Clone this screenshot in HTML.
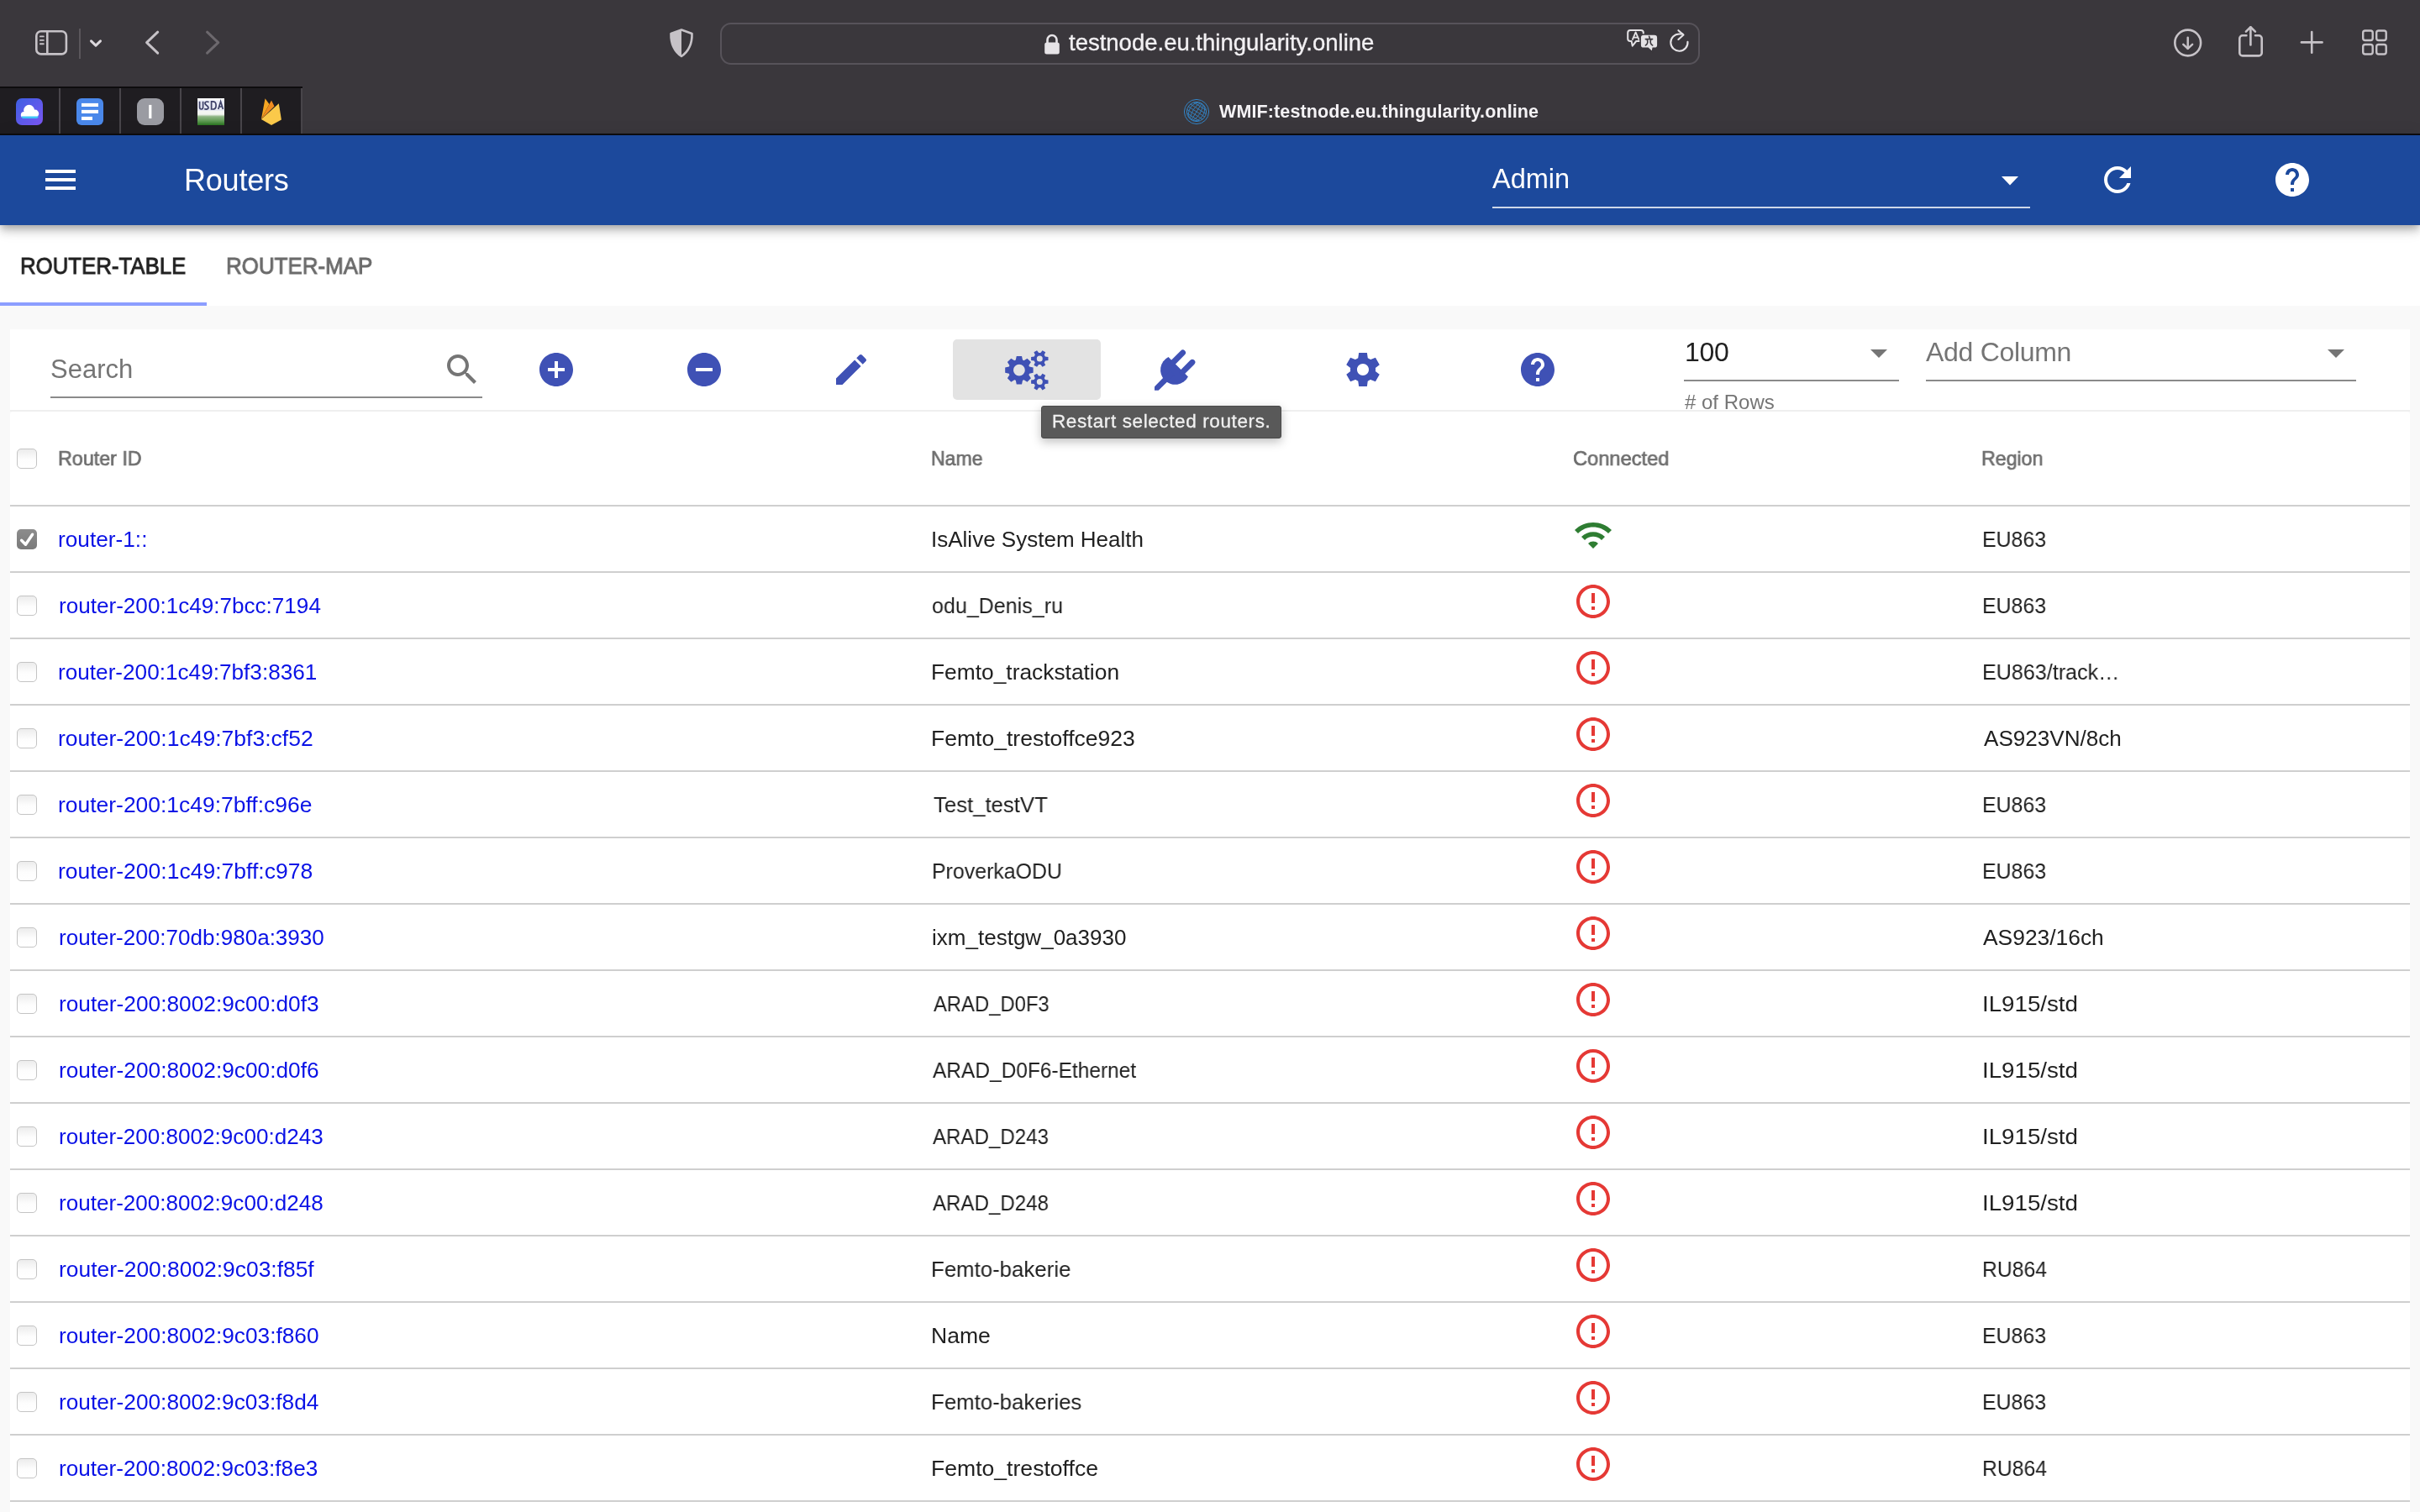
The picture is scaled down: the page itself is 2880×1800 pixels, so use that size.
<!DOCTYPE html>
<html><head><meta charset="utf-8"><title>Routers</title>
<style>
html,body{margin:0;padding:0;width:2880px;height:1800px;overflow:hidden;background:#f9f9f9}
.a{position:absolute}
.t{position:absolute;white-space:nowrap;font-family:"Liberation Sans", sans-serif;will-change:transform}
svg.a{overflow:visible}
</style></head><body>
<div class="a" style="left:0px;top:0px;width:2880px;height:161px;background:#3a373c"></div>
<div class="a" style="left:0px;top:104px;width:359px;height:57px;background:#1f1d21"></div>
<div class="a" style="left:0px;top:103px;width:360px;height:2px;background:#0d0c0e"></div>
<div class="a" style="left:0px;top:159px;width:2880px;height:2px;background:#0d0c0e"></div>
<div class="a" style="left:70px;top:105px;width:2px;height:54px;background:#48454a"></div>
<div class="a" style="left:142px;top:105px;width:2px;height:54px;background:#48454a"></div>
<div class="a" style="left:214px;top:105px;width:2px;height:54px;background:#48454a"></div>
<div class="a" style="left:286px;top:105px;width:2px;height:54px;background:#48454a"></div>
<div class="a" style="left:358px;top:105px;width:2px;height:54px;background:#48454a"></div>
<svg class="a" style="left:40px;top:34px;" width="44" height="34" viewBox="0 0 44 34"><rect x="3.3" y="3.2" width="35.6" height="27.2" rx="5.5" fill="none" stroke="#c6c2c7" stroke-width="2.6"/><line x1="16.3" y1="3" x2="16.3" y2="31" stroke="#c6c2c7" stroke-width="2.6"/><g stroke="#c6c2c7" stroke-width="1.9" stroke-linecap="round"><line x1="7.9" y1="9.4" x2="11.8" y2="9.4"/><line x1="7.9" y1="13.9" x2="11.8" y2="13.9"/><line x1="7.9" y1="18.2" x2="11.8" y2="18.2"/></g></svg>
<div class="a" style="left:94px;top:34px;width:2px;height:36px;background:#5a565b"></div>
<svg class="a" style="left:104px;top:44px;" width="20" height="14" viewBox="0 0 20 14"><polyline points="4.5,4.9 10,10.2 15.5,4.9" fill="none" stroke="#dcd8dd" stroke-width="3" stroke-linecap="round" stroke-linejoin="round"/></svg>
<svg class="a" style="left:168px;top:32px;" width="26" height="38" viewBox="0 0 26 38"><polyline points="19.7,6.2 6.6,18.65 19.7,31.1" fill="none" stroke="#c6c2c7" stroke-width="3" stroke-linecap="round" stroke-linejoin="round"/></svg>
<svg class="a" style="left:240px;top:32px;" width="26" height="38" viewBox="0 0 26 38"><polyline points="6.6,6.2 19.7,18.65 6.6,31.1" fill="none" stroke="#6c686d" stroke-width="3" stroke-linecap="round" stroke-linejoin="round"/></svg>
<svg class="a" style="left:794px;top:32px;" width="34" height="40" viewBox="0 0 34 40"><path d="M17 3.5 L29.5 8 Q30 26 17 35 Q4 26 4.5 8 Z" fill="none" stroke="#c6c2c7" stroke-width="2.6" stroke-linejoin="round"/><path d="M17 3.5 L4.5 8 Q4 26 17 35 Z" fill="#c6c2c7"/></svg>
<div class="a" style="left:857px;top:27px;width:1166px;height:50px;border:2px solid #57535a;border-radius:13px;box-sizing:border-box"></div>
<svg class="a" style="left:1240px;top:38px;" width="24" height="30" viewBox="0 0 24 30"><path d="M6.5 13 V9.5 a5.5 5.5 0 0 1 11 0 V13" fill="none" stroke="#e6e3e7" stroke-width="2.6"/><rect x="3.2" y="12.5" width="17.6" height="14" rx="2.5" fill="#e6e3e7"/></svg>
<div class="t sf" style="left:1272.00px;top:36.72px;font-size:27.5px;line-height:27.5px;color:#f2f0f3;font-weight:400;letter-spacing:0px;-webkit-text-stroke:0.35px #f2f0f3;">testnode.eu.thingularity.online</div>
<svg class="a" style="left:1930px;top:30px;" width="50" height="36" viewBox="0 0 50 36"><path d="M10.20 6.10 L22.80 6.10 Q25.80 6.10 25.80 9.10 L25.80 16.00 Q25.80 19.00 22.80 19.00 L17.20 19.00 L12.70 24.60 L11.60 19.00 L10.20 19.00 Q7.20 19.00 7.20 16.00 L7.20 9.10 Q7.20 6.10 10.20 6.10 Z" fill="none" stroke="#e4e2e5" stroke-width="2" stroke-linejoin="round"/><path d="M12.60 17.60 L16.60 8.40 L20.60 17.60 M13.90 14.60 L19.30 14.60" fill="none" stroke="#e4e2e5" stroke-width="1.8" stroke-linejoin="round"/><path d="M26.10 11.00 L38.90 11.00 Q42.90 11.00 42.90 15.00 L42.90 23.40 Q42.90 27.40 38.90 27.40 L37.20 27.40 L36.30 31.90 L31.20 27.40 L26.10 27.40 Q22.10 27.40 22.10 23.40 L22.10 15.00 Q22.10 11.00 26.10 11.00 Z" fill="#e4e2e5" stroke="#3a373c" stroke-width="1.6"/><path d="M32.60 13.30 L33.20 15.20 M28.30 16.60 L36.60 16.60 M30.10 16.80 Q32.20 22.00 28.30 24.00 M34.80 16.80 Q32.80 22.00 36.70 24.00" fill="none" stroke="#3a373c" stroke-width="1.6" stroke-linecap="round"/></svg>
<svg class="a" style="left:1984px;top:32px;" width="30" height="32" viewBox="0 0 30 32"><path d="M24.46 17.72 A10.1 10.1 0 1 1 14.4 8.5 H18.5" fill="none" stroke="#e4e2e5" stroke-width="2.1" stroke-linecap="round"/><polyline points="13.4,4.2 19.5,9.5 13.4,15" fill="none" stroke="#e4e2e5" stroke-width="2.1" stroke-linecap="round" stroke-linejoin="round"/></svg>
<svg class="a" style="left:2584px;top:32px;" width="40" height="40" viewBox="0 0 40 40"><circle cx="19.7" cy="19" r="15.4" fill="none" stroke="#c6c2c7" stroke-width="2.6"/><line x1="19.7" y1="12.8" x2="19.7" y2="25.7" stroke="#c6c2c7" stroke-width="2.5" stroke-linecap="round"/><polyline points="14.3,20.9 19.7,25.9 25.1,20.9" fill="none" stroke="#c6c2c7" stroke-width="2.5" stroke-linecap="round" stroke-linejoin="round"/></svg>
<svg class="a" style="left:2660px;top:28px;" width="38" height="44" viewBox="0 0 38 44"><path d="M13.4 14.3 H8.8 a3.5 3.5 0 0 0 -3.5 3.5 V34.9 a3.5 3.5 0 0 0 3.5 3.5 H28.2 a3.5 3.5 0 0 0 3.5 -3.5 V17.8 a3.5 3.5 0 0 0 -3.5 -3.5 H24" fill="none" stroke="#c6c2c7" stroke-width="2.6" stroke-linecap="round"/><line x1="18.4" y1="4.5" x2="18.4" y2="25.4" stroke="#c6c2c7" stroke-width="2.6" stroke-linecap="round"/><polyline points="12.9,9.6 18.4,4.3 23.9,9.6" fill="none" stroke="#c6c2c7" stroke-width="2.6" stroke-linecap="round" stroke-linejoin="round"/></svg>
<svg class="a" style="left:2734px;top:33px;" width="36" height="36" viewBox="0 0 36 36"><line x1="17.2" y1="5.1" x2="17.2" y2="29.7" stroke="#c6c2c7" stroke-width="2.6" stroke-linecap="round"/><line x1="4.9" y1="17.4" x2="29.5" y2="17.4" stroke="#c6c2c7" stroke-width="2.6" stroke-linecap="round"/></svg>
<svg class="a" style="left:2808px;top:32px;" width="40" height="40" viewBox="0 0 40 40"><rect x="4.2" y="4.5" width="11.5" height="11.5" rx="2.5" fill="none" stroke="#c6c2c7" stroke-width="2.4"/><rect x="20.2" y="4.5" width="11.5" height="11.5" rx="2.5" fill="none" stroke="#c6c2c7" stroke-width="2.4"/><rect x="4.2" y="21" width="11.5" height="11.5" rx="2.5" fill="none" stroke="#c6c2c7" stroke-width="2.4"/><rect x="20.2" y="21" width="11.5" height="11.5" rx="2.5" fill="none" stroke="#c6c2c7" stroke-width="2.4"/></svg>
<svg class="a" style="left:18px;top:116px;" width="34" height="34" viewBox="0 0 34 34"><defs><linearGradient id="cg" x1="0" y1="0" x2="1" y2="1"><stop offset="0" stop-color="#3d5fe2"/><stop offset="1" stop-color="#7a55f2"/></linearGradient></defs><rect x="1" y="1" width="32" height="32" rx="7" fill="url(#cg)"/><g fill="#fff"><circle cx="16.6" cy="15.2" r="6.4"/><circle cx="23.6" cy="19.2" r="4.6"/><circle cx="10.6" cy="20.8" r="3.8"/><rect x="10" y="18" width="14" height="7"/></g><path d="M7.4 22.6 H28 Q27.6 25 25.5 25 H9.6 Q7.6 25 7.4 22.6Z" fill="#3fc4f5"/></svg>
<svg class="a" style="left:90px;top:116px;" width="34" height="34" viewBox="0 0 34 34"><rect x="1" y="1" width="32" height="32" rx="6" fill="#4a88ea"/><rect x="7" y="6.9" width="20" height="4.1" fill="#fff"/><rect x="7" y="14.9" width="20" height="4.1" fill="#fff"/><rect x="7" y="22.9" width="13" height="4.1" fill="#fff"/></svg>
<svg class="a" style="left:162px;top:116px;" width="34" height="34" viewBox="0 0 34 34"><rect x="1" y="1" width="32" height="32" rx="9" fill="#9a9ba2"/><rect x="15.2" y="8.9" width="3.2" height="16.1" fill="#fff"/></svg>
<svg class="a" style="left:234px;top:116px;" width="34" height="34" viewBox="0 0 34 34"><defs><linearGradient id="ug" x1="0" y1="0" x2="0" y2="1"><stop offset="0" stop-color="#fdfdff"/><stop offset="0.6" stop-color="#f2f5f0"/><stop offset="0.68" stop-color="#8fb585"/><stop offset="0.85" stop-color="#5e9a52"/><stop offset="1" stop-color="#2a7420"/></linearGradient></defs><rect x="1" y="1" width="32" height="32" fill="url(#ug)"/><rect x="1" y="3.5" width="32" height="12.5" fill="#d8dcf0" opacity="0.5"/><path d="M3.6 4.8 V11.8 Q3.6 14 5.6 14 Q7.6 14 7.6 11.8 V4.8 M14.6 5.6 Q12.2 4.4 10.4 5.6 Q9.2 7.6 11.6 9.2 Q14.6 11 13.8 13 Q11.8 14.8 9.2 13.6 M17.6 4.8 V14 H19.4 Q23.1 14 23.1 9.4 Q23.1 4.8 19.4 4.8 Z M25.8 14 L28.6 4.8 L31.4 14 M26.8 11 H30.4" fill="none" stroke="#3e4168" stroke-width="1.7"/></svg>
<svg class="a" style="left:305px;top:116px;" width="34" height="34" viewBox="0 0 34 34"><path d="M5.9 26 L10.5 1.2 L15.5 8 Z" fill="#f6a623"/><path d="M5.9 26 L18 3.6 L21.5 10.5 Z" fill="#f08c1f"/><path d="M5.9 26 L26.8 7.2 L29.9 26.5 L18 33 Z" fill="#fbc94a"/></svg>
<svg class="a" style="left:1408px;top:117px;" width="32" height="32" viewBox="0 0 32 32"><defs><clipPath id="gclip"><circle cx="16" cy="16" r="11.6"/></clipPath></defs><g fill="none" stroke="#3384c6"><circle cx="16" cy="16" r="14.6" stroke-width="1"/><circle cx="16" cy="16" r="11.6" stroke-width="1"/><g clip-path="url(#gclip)" transform="rotate(32 16 16)" stroke-width="0.8"><ellipse cx="16" cy="16" rx="4.4" ry="11.6"/><ellipse cx="16" cy="16" rx="8.8" ry="11.6"/><line x1="16" y1="3" x2="16" y2="29"/><line x1="2" y1="8.4" x2="30" y2="8.4"/><line x1="2" y1="12.2" x2="30" y2="12.2"/><line x1="2" y1="16" x2="30" y2="16"/><line x1="2" y1="19.8" x2="30" y2="19.8"/><line x1="2" y1="23.6" x2="30" y2="23.6"/></g></g></svg>
<div class="t sf" style="left:1450.50px;top:122.50px;font-size:21.5px;line-height:21.5px;color:#f4f2f5;font-weight:700;letter-spacing:0.12px;">WMIF:testnode.eu.thingularity.online</div>
<div class="a" style="left:0px;top:161px;width:2880px;height:1639px;background:#f9f9f9"></div>
<div class="a" style="left:0px;top:268px;width:2880px;height:96px;background:#fff"></div>
<div class="a" style="left:0px;top:161px;width:2880px;height:107px;background:#1c499c;box-shadow:0 4px 8px -2px rgba(0,0,0,.2),0 8px 10px 0 rgba(0,0,0,.14),0 2px 20px 0 rgba(0,0,0,.12)"></div>
<div class="a" style="left:54px;top:202px;width:36px;height:4px;background:#fff"></div>
<div class="a" style="left:54px;top:212px;width:36px;height:4px;background:#fff"></div>
<div class="a" style="left:54px;top:222px;width:36px;height:4px;background:#fff"></div>
<div class="t " style="left:218.50px;top:196.53px;font-size:36px;line-height:36px;color:#fff;font-weight:400;letter-spacing:-0.2px;">Routers</div>
<div class="t " style="left:1776.00px;top:196.69px;font-size:32.5px;line-height:32.5px;color:#fff;font-weight:400;letter-spacing:0px;">Admin</div>
<div class="a" style="left:1776px;top:246px;width:640px;height:2px;background:rgba(255,255,255,0.78)"></div>
<svg class="a" style="left:2382px;top:210px;" width="20" height="11" viewBox="0 0 20 11"><polygon points="0,0 20,0 10,10.5" fill="#fff"/></svg>
<svg class="a" style="left:2496px;top:190px;" width="48" height="48" viewBox="0 0 24 24"><path fill="#fff" d="M17.65 6.35C16.2 4.9 14.21 4 12 4c-4.42 0-7.99 3.58-7.99 8s3.57 8 7.99 8c3.73 0 6.84-2.55 7.73-6h-2.08c-.82 2.33-3.04 4-5.65 4-3.31 0-6-2.69-6-6s2.69-6 6-6c1.66 0 3.14.69 4.22 1.78L13 11h7V4l-2.35 2.35z"/></svg>
<svg class="a" style="left:2704px;top:190px;" width="48" height="48" viewBox="0 0 24 24"><path fill="#fff" d="M12 2C6.48 2 2 6.48 2 12s4.48 10 10 10 10-4.48 10-10S17.52 2 12 2zm1 17h-2v-2h2v2zm2.07-7.75l-.9.92C13.45 12.9 13 13.5 13 15h-2v-.5c0-1.1.45-2.1 1.17-2.83l1.24-1.26c.37-.36.59-.86.59-1.41 0-1.1-.9-2-2-2s-2 .9-2 2H8c0-2.21 1.79-4 4-4s4 1.79 4 4c0 .88-.36 1.68-.93 2.25z"/></svg>
<div class="t " style="left:23.50px;top:302.07px;font-size:28.5px;line-height:28.5px;color:#212121;font-weight:400;letter-spacing:0px;transform:scaleX(0.905);transform-origin:0 0;-webkit-text-stroke:0.95px #212121;">ROUTER-TABLE</div>
<div class="t " style="left:269.00px;top:302.07px;font-size:28.5px;line-height:28.5px;color:#6b6b6b;font-weight:400;letter-spacing:0px;transform:scaleX(0.91);transform-origin:0 0;-webkit-text-stroke:0.95px #6b6b6b;">ROUTER-MAP</div>
<div class="a" style="left:0px;top:360px;width:246px;height:4px;background:#8c9eff"></div>
<div class="a" style="left:12px;top:392px;width:2856px;height:96px;background:#fff"></div>
<div class="a" style="left:12px;top:488px;width:2856px;height:2px;background:#efefef"></div>
<div class="t " style="left:60.00px;top:423.56px;font-size:31px;line-height:31px;color:#757575;font-weight:400;letter-spacing:0px;">Search</div>
<div class="a" style="left:60px;top:472px;width:514px;height:2px;background:#8a8a8a"></div>
<svg class="a" style="left:526px;top:416px;" width="48" height="48" viewBox="0 0 24 24"><path fill="#757575" d="M15.5 14h-.79l-.28-.27C15.41 12.59 16 11.11 16 9.5 16 5.91 13.09 3 9.5 3S3 5.91 3 9.5 5.91 16 9.5 16c1.61 0 3.09-.59 4.23-1.57l.27.28v.79l5 4.99L20.49 19l-4.99-5zm-6 0C7.01 14 5 11.99 5 9.5S7.01 5 9.5 5 14 7.01 14 9.5 11.99 14 9.5 14z"/></svg>
<svg class="a" style="left:638px;top:416px;" width="48" height="48" viewBox="0 0 24 24"><path fill="#3f51b5" d="M12 2C6.48 2 2 6.48 2 12s4.48 10 10 10 10-4.48 10-10S17.52 2 12 2zm5 11h-4v4h-2v-4H7v-2h4V7h2v4h4v2z"/></svg>
<svg class="a" style="left:814px;top:416px;" width="48" height="48" viewBox="0 0 24 24"><path fill="#3f51b5" d="M12 2C6.48 2 2 6.48 2 12s4.48 10 10 10 10-4.48 10-10S17.52 2 12 2zm5 11H7v-2h10v2z"/></svg>
<svg class="a" style="left:989px;top:416px;" width="48" height="48" viewBox="0 0 24 24"><path fill="#3f51b5" d="M3 17.25V21h3.75L17.81 9.94l-3.75-3.75L3 17.25zM20.71 7.04c.39-.39.39-1.02 0-1.41l-2.34-2.34c-.39-.39-1.02-.39-1.41 0l-1.83 1.83 3.75 3.75 1.83-1.83z"/></svg>
<div class="a" style="left:1134px;top:404px;width:176px;height:71.5px;background:#e3e3e3;border-radius:5px"></div>
<svg class="a" style="left:1190px;top:412px;" width="64" height="58" viewBox="0 0 64 58"><path fill="#3f51b5" fill-rule="evenodd" d="M35.03 24.60 L39.61 25.55 L39.61 31.85 L35.03 32.80 L34.88 33.20 L34.73 33.60 L34.56 33.99 L34.37 34.37 L36.94 38.29 L32.49 42.74 L28.57 40.17 L28.19 40.36 L27.80 40.53 L27.40 40.68 L27.00 40.83 L26.05 45.41 L19.75 45.41 L18.80 40.83 L18.40 40.68 L18.00 40.53 L17.61 40.36 L17.23 40.17 L13.31 42.74 L8.86 38.29 L11.43 34.37 L11.24 33.99 L11.07 33.60 L10.92 33.20 L10.77 32.80 L6.19 31.85 L6.19 25.55 L10.77 24.60 L10.92 24.20 L11.07 23.80 L11.24 23.41 L11.43 23.03 L8.86 19.11 L13.31 14.66 L17.23 17.23 L17.61 17.04 L18.00 16.87 L18.40 16.72 L18.80 16.57 L19.75 11.99 L26.05 11.99 L27.00 16.57 L27.40 16.72 L27.80 16.87 L28.19 17.04 L28.57 17.23 L32.49 14.66 L36.94 19.11 L34.37 23.03 L34.56 23.41 L34.73 23.80 L34.88 24.20ZM29.80 28.70 a6.9 6.9 0 1 0 -13.80 0 a6.9 6.9 0 1 0 13.80 0ZM53.84 12.50 L57.49 12.90 L57.49 17.10 L53.84 17.50 L53.62 18.01 L53.36 18.50 L53.07 18.97 L52.73 19.41 L54.21 22.77 L50.57 24.87 L48.40 21.91 L47.85 21.98 L47.30 22.00 L46.75 21.98 L46.20 21.91 L44.03 24.87 L40.39 22.77 L41.87 19.41 L41.53 18.97 L41.24 18.50 L40.98 18.01 L40.76 17.50 L37.11 17.10 L37.11 12.90 L40.76 12.50 L40.98 11.99 L41.24 11.50 L41.53 11.03 L41.87 10.59 L40.39 7.23 L44.03 5.13 L46.20 8.09 L46.75 8.02 L47.30 8.00 L47.85 8.02 L48.40 8.09 L50.57 5.13 L54.21 7.23 L52.73 10.59 L53.07 11.03 L53.36 11.50 L53.62 11.99ZM50.80 15.00 a3.5 3.5 0 1 0 -7.00 0 a3.5 3.5 0 1 0 7.00 0ZM53.84 40.10 L57.49 40.50 L57.49 44.70 L53.84 45.10 L53.62 45.61 L53.36 46.10 L53.07 46.57 L52.73 47.01 L54.21 50.37 L50.57 52.47 L48.40 49.51 L47.85 49.58 L47.30 49.60 L46.75 49.58 L46.20 49.51 L44.03 52.47 L40.39 50.37 L41.87 47.01 L41.53 46.57 L41.24 46.10 L40.98 45.61 L40.76 45.10 L37.11 44.70 L37.11 40.50 L40.76 40.10 L40.98 39.59 L41.24 39.10 L41.53 38.63 L41.87 38.19 L40.39 34.83 L44.03 32.73 L46.20 35.69 L46.75 35.62 L47.30 35.60 L47.85 35.62 L48.40 35.69 L50.57 32.73 L54.21 34.83 L52.73 38.19 L53.07 38.63 L53.36 39.10 L53.62 39.59ZM50.80 42.60 a3.5 3.5 0 1 0 -7.00 0 a3.5 3.5 0 1 0 7.00 0Z"/></svg>
<svg class="a" style="left:1365px;top:410px;" width="65" height="62" viewBox="0 0 65 62"><path fill="#3f51b5" d="M25.48 14.98 L48.92 38.42 A17.4 17.4 0 1 1 25.48 14.98 Z"/><path fill="#3f51b5" d="M27.65 31.30 L9.00 50.20 L9.00 54.80 L13.70 54.80 L32.60 36.25 Z"/><line x1="30.84" y1="21.75" x2="42.64" y2="9.94" stroke="#3f51b5" stroke-width="6.8" stroke-linecap="round"/><line x1="42.15" y1="33.06" x2="53.96" y2="21.26" stroke="#3f51b5" stroke-width="6.8" stroke-linecap="round"/></svg>
<svg class="a" style="left:1598px;top:416px;" width="48" height="48" viewBox="0 0 24 24"><path fill="#3f51b5" d="M19.44 12.99l-.01.02c.04-.33.08-.67.08-1.01 0-.34-.03-.66-.07-.99l.01.02 2.44-1.92-2.43-4.22-2.87 1.16.01.01c-.52-.4-1.09-.74-1.71-.99h.01L14.44 2H9.57l-.44 3.07h.01c-.62.25-1.19.59-1.71.99l.01-.01-2.88-1.17-2.44 4.22 2.44 1.92.01-.02c-.04.33-.07.65-.07.99 0 .34.03.68.08 1.01l-.01-.02-2.1 1.65-.33.26 2.43 4.2 2.88-1.15-.02-.04c.53.41 1.1.75 1.73 1h-.03L9.58 22h4.85s.03-.18.06-.42l.38-2.65h-.01c.62-.25 1.2-.59 1.72-1l-.02.04 2.88 1.15 2.43-4.2s-.14-.12-.33-.26l-2.1-1.65zM12 15.5c-1.93 0-3.5-1.57-3.5-3.5s1.57-3.5 3.5-3.5 3.5 1.57 3.5 3.5-1.57 3.5-3.5 3.5z"/></svg>
<svg class="a" style="left:1806px;top:416px;" width="48" height="48" viewBox="0 0 24 24"><path fill="#3f51b5" d="M12 2C6.48 2 2 6.48 2 12s4.48 10 10 10 10-4.48 10-10S17.52 2 12 2zm1 17h-2v-2h2v2zm2.07-7.75l-.9.92C13.45 12.9 13 13.5 13 15h-2v-.5c0-1.1.45-2.1 1.17-2.83l1.24-1.26c.37-.36.59-.86.59-1.41 0-1.1-.9-2-2-2s-2 .9-2 2H8c0-2.21 1.79-4 4-4s4 1.79 4 4c0 .88-.36 1.68-.93 2.25z"/></svg>
<div class="t " style="left:2005.00px;top:403.21px;font-size:32px;line-height:32px;color:#212121;font-weight:400;letter-spacing:-0.3px;">100</div>
<svg class="a" style="left:2226px;top:416px;" width="20" height="10.5" viewBox="0 0 20 10.5"><polygon points="0,0 20,0 10,10" fill="#757575"/></svg>
<div class="a" style="left:2004px;top:452px;width:256px;height:2px;background:#8a8a8a"></div>
<div class="t " style="left:2005.00px;top:467.38px;font-size:24px;line-height:24px;color:#757575;font-weight:400;letter-spacing:0px;"># of Rows</div>
<div class="t " style="left:2292.00px;top:403.11px;font-size:32px;line-height:32px;color:#757575;font-weight:400;letter-spacing:-0.3px;">Add Column</div>
<svg class="a" style="left:2770px;top:416px;" width="20" height="10.5" viewBox="0 0 20 10.5"><polygon points="0,0 20,0 10,10" fill="#757575"/></svg>
<div class="a" style="left:2292px;top:452px;width:512px;height:2px;background:#8a8a8a"></div>
<div class="a" style="left:12px;top:490px;width:2856px;height:1310px;background:#fff;border-radius:4px 4px 0 0"></div>
<div class="a" style="left:20px;top:534px;width:24px;height:24px;border-radius:5px;box-sizing:border-box;border:1.5px solid #c4c4c4;background:linear-gradient(#ececec,#fdfdfd 55%,#fff)"></div>
<div class="t " style="left:69.00px;top:533.98px;font-size:24px;line-height:24px;color:#6e6e6e;font-weight:400;letter-spacing:0px;transform:scaleX(0.97);transform-origin:0 0;-webkit-text-stroke:0.7px #6e6e6e;">Router ID</div>
<div class="t " style="left:1107.50px;top:533.68px;font-size:24px;line-height:24px;color:#6e6e6e;font-weight:400;letter-spacing:0px;transform:scaleX(0.96);transform-origin:0 0;-webkit-text-stroke:0.7px #6e6e6e;">Name</div>
<div class="t " style="left:1871.50px;top:533.68px;font-size:24px;line-height:24px;color:#6e6e6e;font-weight:400;letter-spacing:0px;transform:scaleX(0.985);transform-origin:0 0;-webkit-text-stroke:0.7px #6e6e6e;">Connected</div>
<div class="t " style="left:2357.50px;top:533.68px;font-size:24px;line-height:24px;color:#6e6e6e;font-weight:400;letter-spacing:0px;transform:scaleX(0.965);transform-origin:0 0;-webkit-text-stroke:0.7px #6e6e6e;">Region</div>
<div class="a" style="left:12px;top:601px;width:2856px;height:2px;background:#cfcfcf"></div>
<div class="a" style="left:20px;top:630px;width:24px;height:24px;border-radius:5px;background:linear-gradient(#8c8c8c,#7a7a7a)"></div>
<svg class="a" style="left:20px;top:630px;" width="24" height="24" viewBox="0 0 24 24"><polyline points="5.6,13.2 10.5,18.2 18.6,6.2" fill="none" stroke="#fff" stroke-width="3.4" stroke-linecap="round" stroke-linejoin="round"/></svg>
<div class="t " style="left:69.48px;top:628.99px;font-size:26px;line-height:26px;color:#0a12e6;font-weight:400;letter-spacing:0px;transform:scaleX(1.0089);transform-origin:0 0;">router-1::</div>
<div class="t " style="left:1108.30px;top:628.99px;font-size:26px;line-height:26px;color:#212121;font-weight:400;letter-spacing:0px;transform:scaleX(1.0004);transform-origin:0 0;">IsAlive System Health</div>
<div class="t " style="left:2359.18px;top:628.99px;font-size:26px;line-height:26px;color:#212121;font-weight:400;letter-spacing:0px;transform:scaleX(0.9579);transform-origin:0 0;">EU863</div>
<svg class="a" style="left:1872px;top:613px;" width="48" height="48" viewBox="0 0 24 24"><path fill="#2e7d32" d="M1 9l2 2c4.97-4.97 13.03-4.97 18 0l2-2C16.93 2.93 7.08 2.93 1 9zm8 8l3 3 3-3c-1.65-1.66-4.34-1.66-6 0zm-4-4l2 2c2.76-2.76 7.24-2.76 10 0l2-2C15.14 9.14 8.87 9.14 5 13z"/></svg>
<div class="a" style="left:12px;top:680px;width:2856px;height:2px;background:#cfcfcf"></div>
<div class="a" style="left:20px;top:709px;width:24px;height:24px;border-radius:5px;box-sizing:border-box;border:1.5px solid #c4c4c4;background:linear-gradient(#ececec,#fdfdfd 55%,#fff)"></div>
<div class="t " style="left:70.19px;top:707.99px;font-size:26px;line-height:26px;color:#0a12e6;font-weight:400;letter-spacing:0px;transform:scaleX(1.0036);transform-origin:0 0;">router-200:1c49:7bcc:7194</div>
<div class="t " style="left:1109.34px;top:707.99px;font-size:26px;line-height:26px;color:#212121;font-weight:400;letter-spacing:0px;transform:scaleX(0.9635);transform-origin:0 0;">odu_Denis_ru</div>
<div class="t " style="left:2359.18px;top:707.99px;font-size:26px;line-height:26px;color:#212121;font-weight:400;letter-spacing:0px;transform:scaleX(0.9579);transform-origin:0 0;">EU863</div>
<svg class="a" style="left:1872px;top:692px;" width="48" height="48" viewBox="0 0 24 24"><path fill="#e53935" d="M11 15h2v2h-2zm0-8h2v6h-2zm.99-5C6.47 2 2 6.48 2 12s4.47 10 9.99 10C17.52 22 22 17.52 22 12S17.52 2 11.99 2zM12 20c-4.42 0-8-3.58-8-8s3.58-8 8-8 8 3.58 8 8-3.58 8-8 8z"/></svg>
<div class="a" style="left:12px;top:759px;width:2856px;height:2px;background:#cfcfcf"></div>
<div class="a" style="left:20px;top:788px;width:24px;height:24px;border-radius:5px;box-sizing:border-box;border:1.5px solid #c4c4c4;background:linear-gradient(#ececec,#fdfdfd 55%,#fff)"></div>
<div class="t " style="left:69.49px;top:786.99px;font-size:26px;line-height:26px;color:#0a12e6;font-weight:400;letter-spacing:0px;transform:scaleX(1.0063);transform-origin:0 0;">router-200:1c49:7bf3:8361</div>
<div class="t " style="left:1108.27px;top:786.99px;font-size:26px;line-height:26px;color:#212121;font-weight:400;letter-spacing:0px;transform:scaleX(1.0133);transform-origin:0 0;">Femto_trackstation</div>
<div class="t " style="left:2359.17px;top:786.99px;font-size:26px;line-height:26px;color:#212121;font-weight:400;letter-spacing:0px;transform:scaleX(0.9659);transform-origin:0 0;">EU863/track…</div>
<svg class="a" style="left:1872px;top:771px;" width="48" height="48" viewBox="0 0 24 24"><path fill="#e53935" d="M11 15h2v2h-2zm0-8h2v6h-2zm.99-5C6.47 2 2 6.48 2 12s4.47 10 9.99 10C17.52 22 22 17.52 22 12S17.52 2 11.99 2zM12 20c-4.42 0-8-3.58-8-8s3.58-8 8-8 8 3.58 8 8-3.58 8-8 8z"/></svg>
<div class="a" style="left:12px;top:838px;width:2856px;height:2px;background:#cfcfcf"></div>
<div class="a" style="left:20px;top:867px;width:24px;height:24px;border-radius:5px;box-sizing:border-box;border:1.5px solid #c4c4c4;background:linear-gradient(#ececec,#fdfdfd 55%,#fff)"></div>
<div class="t " style="left:69.46px;top:865.99px;font-size:26px;line-height:26px;color:#0a12e6;font-weight:400;letter-spacing:0px;transform:scaleX(1.0197);transform-origin:0 0;">router-200:1c49:7bf3:cf52</div>
<div class="t " style="left:1108.26px;top:865.99px;font-size:26px;line-height:26px;color:#212121;font-weight:400;letter-spacing:0px;transform:scaleX(1.0204);transform-origin:0 0;">Femto_trestoffce923</div>
<div class="t " style="left:2361.10px;top:865.99px;font-size:26px;line-height:26px;color:#212121;font-weight:400;letter-spacing:0px;transform:scaleX(1.0031);transform-origin:0 0;">AS923VN/8ch</div>
<svg class="a" style="left:1872px;top:850px;" width="48" height="48" viewBox="0 0 24 24"><path fill="#e53935" d="M11 15h2v2h-2zm0-8h2v6h-2zm.99-5C6.47 2 2 6.48 2 12s4.47 10 9.99 10C17.52 22 22 17.52 22 12S17.52 2 11.99 2zM12 20c-4.42 0-8-3.58-8-8s3.58-8 8-8 8 3.58 8 8-3.58 8-8 8z"/></svg>
<div class="a" style="left:12px;top:917px;width:2856px;height:2px;background:#cfcfcf"></div>
<div class="a" style="left:20px;top:946px;width:24px;height:24px;border-radius:5px;box-sizing:border-box;border:1.5px solid #c4c4c4;background:linear-gradient(#ececec,#fdfdfd 55%,#fff)"></div>
<div class="t " style="left:69.47px;top:944.99px;font-size:26px;line-height:26px;color:#0a12e6;font-weight:400;letter-spacing:0px;transform:scaleX(1.017);transform-origin:0 0;">router-200:1c49:7bff:c96e</div>
<div class="t " style="left:1110.50px;top:944.99px;font-size:26px;line-height:26px;color:#212121;font-weight:400;letter-spacing:0px;transform:scaleX(0.9891);transform-origin:0 0;">Test_testVT</div>
<div class="t " style="left:2359.18px;top:944.99px;font-size:26px;line-height:26px;color:#212121;font-weight:400;letter-spacing:0px;transform:scaleX(0.9579);transform-origin:0 0;">EU863</div>
<svg class="a" style="left:1872px;top:929px;" width="48" height="48" viewBox="0 0 24 24"><path fill="#e53935" d="M11 15h2v2h-2zm0-8h2v6h-2zm.99-5C6.47 2 2 6.48 2 12s4.47 10 9.99 10C17.52 22 22 17.52 22 12S17.52 2 11.99 2zM12 20c-4.42 0-8-3.58-8-8s3.58-8 8-8 8 3.58 8 8-3.58 8-8 8z"/></svg>
<div class="a" style="left:12px;top:996px;width:2856px;height:2px;background:#cfcfcf"></div>
<div class="a" style="left:20px;top:1025px;width:24px;height:24px;border-radius:5px;box-sizing:border-box;border:1.5px solid #c4c4c4;background:linear-gradient(#ececec,#fdfdfd 55%,#fff)"></div>
<div class="t " style="left:69.46px;top:1023.99px;font-size:26px;line-height:26px;color:#0a12e6;font-weight:400;letter-spacing:0px;transform:scaleX(1.0197);transform-origin:0 0;">router-200:1c49:7bff:c978</div>
<div class="t " style="left:1108.58px;top:1023.99px;font-size:26px;line-height:26px;color:#212121;font-weight:400;letter-spacing:0px;transform:scaleX(0.9576);transform-origin:0 0;">ProverkaODU</div>
<div class="t " style="left:2359.18px;top:1023.99px;font-size:26px;line-height:26px;color:#212121;font-weight:400;letter-spacing:0px;transform:scaleX(0.9579);transform-origin:0 0;">EU863</div>
<svg class="a" style="left:1872px;top:1008px;" width="48" height="48" viewBox="0 0 24 24"><path fill="#e53935" d="M11 15h2v2h-2zm0-8h2v6h-2zm.99-5C6.47 2 2 6.48 2 12s4.47 10 9.99 10C17.52 22 22 17.52 22 12S17.52 2 11.99 2zM12 20c-4.42 0-8-3.58-8-8s3.58-8 8-8 8 3.58 8 8-3.58 8-8 8z"/></svg>
<div class="a" style="left:12px;top:1075px;width:2856px;height:2px;background:#cfcfcf"></div>
<div class="a" style="left:20px;top:1104px;width:24px;height:24px;border-radius:5px;box-sizing:border-box;border:1.5px solid #c4c4c4;background:linear-gradient(#ececec,#fdfdfd 55%,#fff)"></div>
<div class="t " style="left:69.50px;top:1102.99px;font-size:26px;line-height:26px;color:#0a12e6;font-weight:400;letter-spacing:0px;transform:scaleX(1.0022);transform-origin:0 0;">router-200:70db:980a:3930</div>
<div class="t " style="left:1108.50px;top:1102.99px;font-size:26px;line-height:26px;color:#212121;font-weight:400;letter-spacing:0px;transform:scaleX(1.0009);transform-origin:0 0;">ixm_testgw_0a3930</div>
<div class="t " style="left:2360.30px;top:1102.99px;font-size:26px;line-height:26px;color:#212121;font-weight:400;letter-spacing:0px;transform:scaleX(1.015);transform-origin:0 0;">AS923/16ch</div>
<svg class="a" style="left:1872px;top:1087px;" width="48" height="48" viewBox="0 0 24 24"><path fill="#e53935" d="M11 15h2v2h-2zm0-8h2v6h-2zm.99-5C6.47 2 2 6.48 2 12s4.47 10 9.99 10C17.52 22 22 17.52 22 12S17.52 2 11.99 2zM12 20c-4.42 0-8-3.58-8-8s3.58-8 8-8 8 3.58 8 8-3.58 8-8 8z"/></svg>
<div class="a" style="left:12px;top:1154px;width:2856px;height:2px;background:#cfcfcf"></div>
<div class="a" style="left:20px;top:1183px;width:24px;height:24px;border-radius:5px;box-sizing:border-box;border:1.5px solid #c4c4c4;background:linear-gradient(#ececec,#fdfdfd 55%,#fff)"></div>
<div class="t " style="left:69.58px;top:1181.99px;font-size:26px;line-height:26px;color:#0a12e6;font-weight:400;letter-spacing:0px;transform:scaleX(1.0102);transform-origin:0 0;">router-200:8002:9c00:d0f3</div>
<div class="t " style="left:1110.50px;top:1181.99px;font-size:26px;line-height:26px;color:#212121;font-weight:400;letter-spacing:0px;transform:scaleX(0.9161);transform-origin:0 0;">ARAD_D0F3</div>
<div class="t " style="left:2358.87px;top:1181.99px;font-size:26px;line-height:26px;color:#212121;font-weight:400;letter-spacing:0px;transform:scaleX(1.065);transform-origin:0 0;">IL915/std</div>
<svg class="a" style="left:1872px;top:1166px;" width="48" height="48" viewBox="0 0 24 24"><path fill="#e53935" d="M11 15h2v2h-2zm0-8h2v6h-2zm.99-5C6.47 2 2 6.48 2 12s4.47 10 9.99 10C17.52 22 22 17.52 22 12S17.52 2 11.99 2zM12 20c-4.42 0-8-3.58-8-8s3.58-8 8-8 8 3.58 8 8-3.58 8-8 8z"/></svg>
<div class="a" style="left:12px;top:1233px;width:2856px;height:2px;background:#cfcfcf"></div>
<div class="a" style="left:20px;top:1262px;width:24px;height:24px;border-radius:5px;box-sizing:border-box;border:1.5px solid #c4c4c4;background:linear-gradient(#ececec,#fdfdfd 55%,#fff)"></div>
<div class="t " style="left:69.58px;top:1260.99px;font-size:26px;line-height:26px;color:#0a12e6;font-weight:400;letter-spacing:0px;transform:scaleX(1.0102);transform-origin:0 0;">router-200:8002:9c00:d0f6</div>
<div class="t " style="left:1110.00px;top:1260.99px;font-size:26px;line-height:26px;color:#212121;font-weight:400;letter-spacing:0px;transform:scaleX(0.9412);transform-origin:0 0;">ARAD_D0F6-Ethernet</div>
<div class="t " style="left:2358.87px;top:1260.99px;font-size:26px;line-height:26px;color:#212121;font-weight:400;letter-spacing:0px;transform:scaleX(1.065);transform-origin:0 0;">IL915/std</div>
<svg class="a" style="left:1872px;top:1245px;" width="48" height="48" viewBox="0 0 24 24"><path fill="#e53935" d="M11 15h2v2h-2zm0-8h2v6h-2zm.99-5C6.47 2 2 6.48 2 12s4.47 10 9.99 10C17.52 22 22 17.52 22 12S17.52 2 11.99 2zM12 20c-4.42 0-8-3.58-8-8s3.58-8 8-8 8 3.58 8 8-3.58 8-8 8z"/></svg>
<div class="a" style="left:12px;top:1312px;width:2856px;height:2px;background:#cfcfcf"></div>
<div class="a" style="left:20px;top:1341px;width:24px;height:24px;border-radius:5px;box-sizing:border-box;border:1.5px solid #c4c4c4;background:linear-gradient(#ececec,#fdfdfd 55%,#fff)"></div>
<div class="t " style="left:69.59px;top:1339.99px;font-size:26px;line-height:26px;color:#0a12e6;font-weight:400;letter-spacing:0px;transform:scaleX(1.0032);transform-origin:0 0;">router-200:8002:9c00:d243</div>
<div class="t " style="left:1110.00px;top:1339.99px;font-size:26px;line-height:26px;color:#212121;font-weight:400;letter-spacing:0px;transform:scaleX(0.9264);transform-origin:0 0;">ARAD_D243</div>
<div class="t " style="left:2358.87px;top:1339.99px;font-size:26px;line-height:26px;color:#212121;font-weight:400;letter-spacing:0px;transform:scaleX(1.065);transform-origin:0 0;">IL915/std</div>
<svg class="a" style="left:1872px;top:1324px;" width="48" height="48" viewBox="0 0 24 24"><path fill="#e53935" d="M11 15h2v2h-2zm0-8h2v6h-2zm.99-5C6.47 2 2 6.48 2 12s4.47 10 9.99 10C17.52 22 22 17.52 22 12S17.52 2 11.99 2zM12 20c-4.42 0-8-3.58-8-8s3.58-8 8-8 8 3.58 8 8-3.58 8-8 8z"/></svg>
<div class="a" style="left:12px;top:1391px;width:2856px;height:2px;background:#cfcfcf"></div>
<div class="a" style="left:20px;top:1420px;width:24px;height:24px;border-radius:5px;box-sizing:border-box;border:1.5px solid #c4c4c4;background:linear-gradient(#ececec,#fdfdfd 55%,#fff)"></div>
<div class="t " style="left:69.59px;top:1418.99px;font-size:26px;line-height:26px;color:#0a12e6;font-weight:400;letter-spacing:0px;transform:scaleX(1.0032);transform-origin:0 0;">router-200:8002:9c00:d248</div>
<div class="t " style="left:1110.00px;top:1418.99px;font-size:26px;line-height:26px;color:#212121;font-weight:400;letter-spacing:0px;transform:scaleX(0.9264);transform-origin:0 0;">ARAD_D248</div>
<div class="t " style="left:2358.87px;top:1418.99px;font-size:26px;line-height:26px;color:#212121;font-weight:400;letter-spacing:0px;transform:scaleX(1.065);transform-origin:0 0;">IL915/std</div>
<svg class="a" style="left:1872px;top:1403px;" width="48" height="48" viewBox="0 0 24 24"><path fill="#e53935" d="M11 15h2v2h-2zm0-8h2v6h-2zm.99-5C6.47 2 2 6.48 2 12s4.47 10 9.99 10C17.52 22 22 17.52 22 12S17.52 2 11.99 2zM12 20c-4.42 0-8-3.58-8-8s3.58-8 8-8 8 3.58 8 8-3.58 8-8 8z"/></svg>
<div class="a" style="left:12px;top:1470px;width:2856px;height:2px;background:#cfcfcf"></div>
<div class="a" style="left:20px;top:1499px;width:24px;height:24px;border-radius:5px;box-sizing:border-box;border:1.5px solid #c4c4c4;background:linear-gradient(#ececec,#fdfdfd 55%,#fff)"></div>
<div class="t " style="left:69.57px;top:1497.99px;font-size:26px;line-height:26px;color:#0a12e6;font-weight:400;letter-spacing:0px;transform:scaleX(1.0148);transform-origin:0 0;">router-200:8002:9c03:f85f</div>
<div class="t " style="left:1108.02px;top:1497.99px;font-size:26px;line-height:26px;color:#212121;font-weight:400;letter-spacing:0px;transform:scaleX(0.9921);transform-origin:0 0;">Femto-bakerie</div>
<div class="t " style="left:2359.10px;top:1497.99px;font-size:26px;line-height:26px;color:#212121;font-weight:400;letter-spacing:0px;transform:scaleX(0.9513);transform-origin:0 0;">RU864</div>
<svg class="a" style="left:1872px;top:1482px;" width="48" height="48" viewBox="0 0 24 24"><path fill="#e53935" d="M11 15h2v2h-2zm0-8h2v6h-2zm.99-5C6.47 2 2 6.48 2 12s4.47 10 9.99 10C17.52 22 22 17.52 22 12S17.52 2 11.99 2zM12 20c-4.42 0-8-3.58-8-8s3.58-8 8-8 8 3.58 8 8-3.58 8-8 8z"/></svg>
<div class="a" style="left:12px;top:1549px;width:2856px;height:2px;background:#cfcfcf"></div>
<div class="a" style="left:20px;top:1578px;width:24px;height:24px;border-radius:5px;box-sizing:border-box;border:1.5px solid #c4c4c4;background:linear-gradient(#ececec,#fdfdfd 55%,#fff)"></div>
<div class="t " style="left:69.58px;top:1576.99px;font-size:26px;line-height:26px;color:#0a12e6;font-weight:400;letter-spacing:0px;transform:scaleX(1.0102);transform-origin:0 0;">router-200:8002:9c03:f860</div>
<div class="t " style="left:1107.96px;top:1576.99px;font-size:26px;line-height:26px;color:#212121;font-weight:400;letter-spacing:0px;transform:scaleX(1.0212);transform-origin:0 0;">Name</div>
<div class="t " style="left:2359.18px;top:1576.99px;font-size:26px;line-height:26px;color:#212121;font-weight:400;letter-spacing:0px;transform:scaleX(0.9579);transform-origin:0 0;">EU863</div>
<svg class="a" style="left:1872px;top:1561px;" width="48" height="48" viewBox="0 0 24 24"><path fill="#e53935" d="M11 15h2v2h-2zm0-8h2v6h-2zm.99-5C6.47 2 2 6.48 2 12s4.47 10 9.99 10C17.52 22 22 17.52 22 12S17.52 2 11.99 2zM12 20c-4.42 0-8-3.58-8-8s3.58-8 8-8 8 3.58 8 8-3.58 8-8 8z"/></svg>
<div class="a" style="left:12px;top:1628px;width:2856px;height:2px;background:#cfcfcf"></div>
<div class="a" style="left:20px;top:1657px;width:24px;height:24px;border-radius:5px;box-sizing:border-box;border:1.5px solid #c4c4c4;background:linear-gradient(#ececec,#fdfdfd 55%,#fff)"></div>
<div class="t " style="left:69.58px;top:1655.99px;font-size:26px;line-height:26px;color:#0a12e6;font-weight:400;letter-spacing:0px;transform:scaleX(1.0095);transform-origin:0 0;">router-200:8002:9c03:f8d4</div>
<div class="t " style="left:1108.01px;top:1655.99px;font-size:26px;line-height:26px;color:#212121;font-weight:400;letter-spacing:0px;transform:scaleX(0.9927);transform-origin:0 0;">Femto-bakeries</div>
<div class="t " style="left:2359.18px;top:1655.99px;font-size:26px;line-height:26px;color:#212121;font-weight:400;letter-spacing:0px;transform:scaleX(0.9579);transform-origin:0 0;">EU863</div>
<svg class="a" style="left:1872px;top:1640px;" width="48" height="48" viewBox="0 0 24 24"><path fill="#e53935" d="M11 15h2v2h-2zm0-8h2v6h-2zm.99-5C6.47 2 2 6.48 2 12s4.47 10 9.99 10C17.52 22 22 17.52 22 12S17.52 2 11.99 2zM12 20c-4.42 0-8-3.58-8-8s3.58-8 8-8 8 3.58 8 8-3.58 8-8 8z"/></svg>
<div class="a" style="left:12px;top:1707px;width:2856px;height:2px;background:#cfcfcf"></div>
<div class="a" style="left:20px;top:1736px;width:24px;height:24px;border-radius:5px;box-sizing:border-box;border:1.5px solid #c4c4c4;background:linear-gradient(#ececec,#fdfdfd 55%,#fff)"></div>
<div class="t " style="left:69.59px;top:1734.99px;font-size:26px;line-height:26px;color:#0a12e6;font-weight:400;letter-spacing:0px;transform:scaleX(1.0059);transform-origin:0 0;">router-200:8002:9c03:f8e3</div>
<div class="t " style="left:1107.96px;top:1734.99px;font-size:26px;line-height:26px;color:#212121;font-weight:400;letter-spacing:0px;transform:scaleX(1.0224);transform-origin:0 0;">Femto_trestoffce</div>
<div class="t " style="left:2359.10px;top:1734.99px;font-size:26px;line-height:26px;color:#212121;font-weight:400;letter-spacing:0px;transform:scaleX(0.9513);transform-origin:0 0;">RU864</div>
<svg class="a" style="left:1872px;top:1719px;" width="48" height="48" viewBox="0 0 24 24"><path fill="#e53935" d="M11 15h2v2h-2zm0-8h2v6h-2zm.99-5C6.47 2 2 6.48 2 12s4.47 10 9.99 10C17.52 22 22 17.52 22 12S17.52 2 11.99 2zM12 20c-4.42 0-8-3.58-8-8s3.58-8 8-8 8 3.58 8 8-3.58 8-8 8z"/></svg>
<div class="a" style="left:12px;top:1786px;width:2856px;height:2px;background:#cfcfcf"></div>
<div class="a" style="left:1239px;top:483px;width:286px;height:39px;background:#595959;border:1px solid #4a4a4a;box-sizing:border-box;border-radius:3px;box-shadow:0 4px 12px rgba(0,0,0,0.25)"></div>
<div class="t sf" style="left:1251.50px;top:490.95px;font-size:22.5px;line-height:22.5px;color:#f0f0f0;font-weight:400;letter-spacing:0.61px;-webkit-text-stroke:0.3px #f0f0f0;">Restart selected routers.</div>
</body></html>
